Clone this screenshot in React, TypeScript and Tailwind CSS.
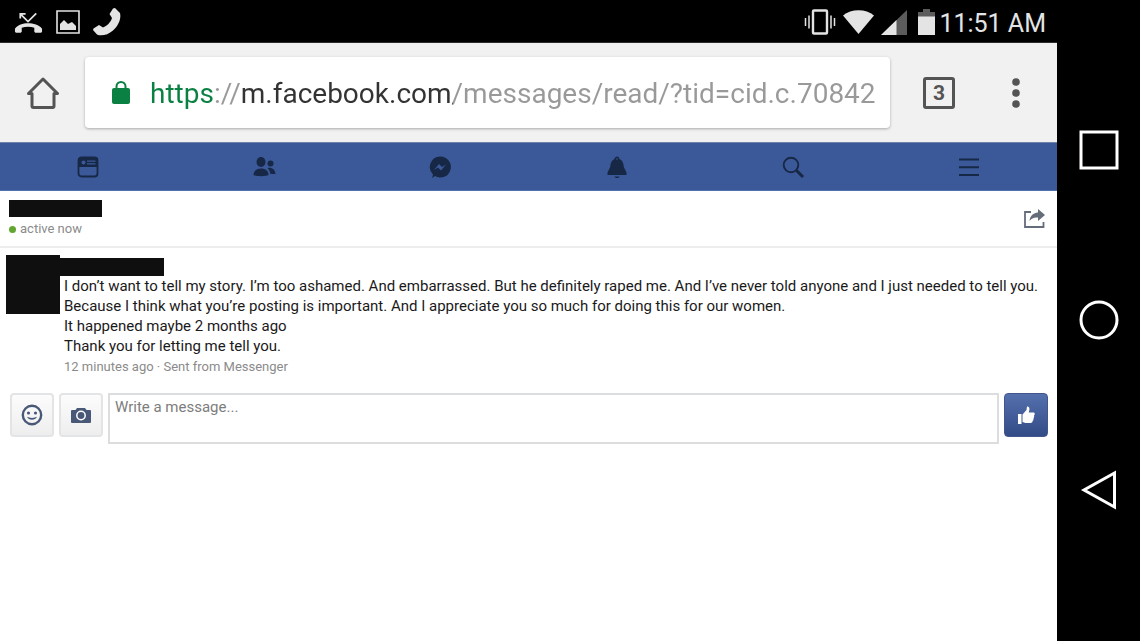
import type { ReactNode } from "react";
import { clsx } from "clsx";

const PAGE_URL = "https://m.facebook.com/messages/read/?tid=cid.c.70842";

const messageLines = [
  "I don’t want to tell my story. I’m too ashamed. And embarrassed. But he definitely raped me. And I’ve never told anyone and I just needed to tell you.",
  "Because I think what you’re posting is important. And I appreciate you so much for doing this for our women.",
  "It happened maybe 2 months ago",
  "Thank you for letting me tell you.",
];

type IconProps = { className?: string; viewBox?: string; children: ReactNode };

function Icon({ className, viewBox = "0 0 24 24", children }: IconProps) {
  return (
    <svg viewBox={viewBox} className={clsx("shrink-0", className)} fill="currentColor" aria-hidden="true">
      {children}
    </svg>
  );
}

function StatusBar() {
  return (
    <div className="flex h-[43px] items-center justify-between border-b border-[#2e2a2e] bg-black pt-[2px] pl-[14px] pr-[11px] text-[#e4e4e4]">
      <div className="flex items-center gap-[13px]">
        <Icon className="h-7 w-[29px]" viewBox="0 0 30 28">
          <path d="M1 24v-3c3-4 8-5.600 13.500-5.600S26 17 29 21v3l-1 1h-6l-1-1v-4c-4-1.300-9-1.300-13 0v4l-1 1H2z" />
          <path d="M6.500 10.500V5.500h5.500M6.500 5.500l8 8 8.500-8.500" fill="none" stroke="currentColor" strokeWidth="1.800" />
        </Icon>
        <Icon className="h-6 w-6">
          <path d="M1 1h22v22H1z" fill="none" stroke="currentColor" strokeWidth="1.600" />
          <path d="M4 20v-6l4-4 4 4 4-2 4 4v4z" />
        </Icon>
        <Icon className="h-7 w-7" viewBox="0 0 28 28">
          <path d="M22 0l5 5c1.500 6-2 13-7 17.500S8 28.500 4 26.500L0 22l.5-1.500L6 17l4 2.500c4-1.500 7.500-5 9-9.500L16.500 6 20 .5z" />
        </Icon>
      </div>
      <div className="flex items-center gap-[7px]">
        <Icon className="h-[26px] w-8" viewBox="0 0 32 26">
          <rect x="9" y="1.500" width="14" height="23" rx="1" fill="none" stroke="currentColor" strokeWidth="2.400" />
          <path d="M1.500 9v8M5 6.500v13M27 6.500v13M30.500 9v8" stroke="currentColor" strokeWidth="1.500" />
        </Icon>
        <Icon className="h-6 w-[31px]" viewBox="0 0 31 24">
          <path d="M15.500 24L0 5.500C8-1.500 23-1.500 31 5.500z" />
        </Icon>
        <Icon className="h-[25px] w-[26px]" viewBox="0 0 26 25">
          <path d="M0 25L26 0v25z" className="text-[#5c5c5c]" />
          <path d="M0 25L15.500 10v15z" />
        </Icon>
        <div className="flex items-center gap-1">
          <Icon className="ml-1 h-[26px] w-[17px]" viewBox="0 0 17 26">
            <path d="M5 0h7v3h5v5H0V3h5z" className="text-[#5c5c5c]" />
            <path d="M0 7.500h17V26H0z" />
          </Icon>
          <time className="pt-1 text-[25px] leading-7">11:51 AM</time>
        </div>
      </div>
    </div>
  );
}

function BrowserBar() {
  return (
    <div className="flex items-center bg-[#f1f1f1] py-[14px] text-[#545454]">
      <button aria-label="Home" className="flex w-[85px] shrink-0 justify-center">
        <Icon className="h-8 w-8" viewBox="0 0 32 32">
          <path
            d="M1.500 16.500L16 2l14.500 14.500H27V29q0 1.500-1.500 1.500h-19Q5 30.500 5 29V16.500z"
            fill="none"
            stroke="currentColor"
            strokeWidth="3"
            strokeLinejoin="round"
          />
        </Icon>
      </button>
      <form className="flex h-[71px] min-w-0 flex-1 items-center rounded-[4px] bg-white pl-[27px] pr-[14px] shadow-[0_1px_3px_rgba(0,0,0,0.3)]">
        <Icon className="mr-5 h-6 w-[18px] text-[#0b8043]" viewBox="0 0 18 24">
          <rect y="7" width="18" height="16" rx="2" />
          <path d="M4.500 9V5.500a4.500 4.500 0 0 1 9 0V9" fill="none" stroke="currentColor" strokeWidth="2" />
        </Icon>
        {/* scheme in green, host in dark, everything else greyed out */}
        <input
          aria-label="Address"
          defaultValue={PAGE_URL}
          spellCheck={false}
          className="h-10 min-w-0 flex-1 bg-[linear-gradient(90deg,#0b8043_64px,#999_64px,#999_91px,#333_91px,#333_303px,#999_303px)] bg-clip-text pt-[2px] text-[28px] text-transparent outline-none"
        />
      </form>
      <button
        aria-label="3 open tabs"
        className="ml-[33px] flex size-8 shrink-0 items-center justify-center rounded-[3px] border-[3px] border-[#545454] text-[21px] leading-6 font-bold"
      >
        3
      </button>
      <button aria-label="More options" className="flex w-[102px] shrink-0 justify-end pr-[37px]">
        <Icon className="h-[30px] w-2" viewBox="0 0 8 30">
          <circle cx="4" cy="4" r="3.800" />
          <circle cx="4" cy="15" r="3.800" />
          <circle cx="4" cy="26" r="3.800" />
        </Icon>
      </button>
    </div>
  );
}

const navItems = [
  {
    label: "News Feed",
    icon: (
      <>
        <rect x="2.500" y="2.500" width="19" height="19" rx="3" fill="none" stroke="currentColor" strokeWidth="1.800" />
        <path d="M2 12V5q0-3 3-3h14q3 0 3 3v7z" />
        <circle cx="7.500" cy="7.500" r="2" className="text-[#3b5998]" />
        <path d="M11 5.500h8.500v1.200H11zM11 8.300h8.500v1.200H11z" className="text-[#3b5998]" />
      </>
    ),
  },
  {
    label: "Friend Requests",
    icon: (
      <>
        <ellipse cx="9" cy="7" rx="4.500" ry="5" />
        <path d="M1.500 20c0-4 3-6.500 7.500-6.500s7.500 2.500 7.500 6.500c-2 1.500-13 1.500-15 0z" />
        <circle cx="18.500" cy="8.500" r="3" />
        <path d="M15.500 13c4-1 7.500 1 8 6h-5c-.5-2.500-1.500-4.500-3-6z" />
      </>
    ),
  },
  {
    label: "Messages",
    icon: (
      <>
        <path d="M12 1.500a10.500 10.500 0 1 1-5 19.500L4 23l1-3.500A10.500 10.500 0 0 1 12 1.500z" />
        <path d="M6 15l5-6 3 3 4-2.500-5 6-3-3z" className="text-[#3b5998]" />
      </>
    ),
  },
  {
    label: "Notifications",
    icon: (
      <>
        <path d="M12 1.500c1.500 0 2.300 1 2.500 2.500 3 1.300 4 4 4.300 8l2.700 5.500V20h-19v-2.500L5.200 12c.3-4 1.300-6.700 4.300-8 .2-1.500 1-2.500 2.500-2.500z" />
        <path d="M9.500 21.500h5c-.5 2-4.500 2-5 0z" />
        <circle cx="12" cy="4" r=".8" className="text-[#3b5998]" />
      </>
    ),
  },
  {
    label: "Search",
    icon: (
      <g fill="none" stroke="currentColor">
        <circle cx="10" cy="10" r="7.300" strokeWidth="1.900" />
        <path d="M15.500 15.500l6.500 6.500" strokeWidth="3" />
      </g>
    ),
  },
  {
    label: "Menu",
    icon: <path d="M2 3.500h20v2H2zM2 11.300h20v2H2zM2 19h20v2H2z" />,
  },
];

function FacebookNav() {
  return (
    <nav className="grid h-[49px] grid-cols-6 border-y border-t-[#7083ab] border-b-[#5270ad] bg-[#3b5998] pt-px text-[#172846]">
      {navItems.map((item) => (
        <a key={item.label} href="#" aria-label={item.label} className="flex items-center justify-center">
          <Icon className="size-6">{item.icon}</Icon>
        </a>
      ))}
    </nav>
  );
}

function ThreadHeader() {
  return (
    <header className="flex h-[57px] items-center justify-between border-b-2 border-[#ededed] pl-[9px] pr-3">
      <div>
        <div className="h-[17px] w-[93px] bg-[#0f0f0f]" />
        <p className="mt-1 flex items-center gap-1 text-[13px] leading-4 text-[#8b8b8b]">
          <span className="size-[7px] rounded-full bg-[#63a62f]" />
          active now
        </p>
      </div>
      <a href="#" aria-label="Share">
        <Icon className="h-[19px] w-[21px] text-[#656c7a]" viewBox="0 0 21 19">
          <path d="M7 3H1v15h18.500v-5" fill="none" stroke="currentColor" strokeWidth="1.800" />
          <path d="M14 0l7 6-7 6V8.500c-4-.5-6.500 1-8.500 3.500C6 7.500 8.500 4 14 3.500z" />
        </Icon>
      </a>
    </header>
  );
}

function Message() {
  return (
    <article className="flex pt-[7px] pl-[6px]">
      <div className="h-[59px] w-[54px] shrink-0 bg-[#0f0f0f]" />
      <div className="min-w-0 flex-1 pt-[3px]">
        <div className="h-[18px] w-[104px] bg-[#0f0f0f]" />
        <div className="pl-1 text-[15px] leading-5 text-[#1a1a1a]">
          {messageLines.map((line) => (
            <p key={line}>{line}</p>
          ))}
        </div>
        <p className="mt-px pl-1 text-[13px] leading-5 text-[#8b8b8b]">12 minutes ago · Sent from Messenger</p>
      </div>
    </article>
  );
}

const toolButton =
  "flex size-11 shrink-0 items-center justify-center rounded-[4px] border-2 border-[#e3e4e6] bg-linear-to-b from-[#fcfcfc] to-[#eeeeef] text-[#4a5878]";

function Composer() {
  return (
    <form className="mt-4 flex items-start gap-[5px] pl-[10px] pr-[9px]">
      <button type="button" aria-label="Add a sticker" className={toolButton}>
        <Icon className="size-[22px]" viewBox="0 0 22 22">
          <circle cx="11" cy="11" r="9.200" fill="none" stroke="currentColor" strokeWidth="2.400" />
          <circle cx="7.500" cy="9" r="1.600" />
          <circle cx="14.500" cy="9" r="1.600" />
          <path d="M6 12.800c3 1.500 7 1.500 10 0-1.500 4-8.500 4-10 0z" />
        </Icon>
      </button>
      <button type="button" aria-label="Add a photo" className={toolButton}>
        <Icon className="h-4 w-5" viewBox="0 0 20 16">
          <path d="M6 1h8l1.500 2H19q1 0 1 1v11q0 1-1 1H1q-1 0-1-1V4q0-1 1-1h3.500z" />
          <circle cx="10" cy="8.500" r="4.200" fill="none" stroke="#fff" strokeWidth="1.500" />
        </Icon>
      </button>
      <textarea
        aria-label="Write a message"
        placeholder="Write a message..."
        className="h-[51px] min-w-0 flex-1 resize-none border-2 border-[#dcdddf] px-[5px] py-[2px] text-[15px] leading-5 outline-none placeholder:text-[#7d7d7d]"
      />
      <button
        type="button"
        aria-label="Send a like"
        className="flex size-11 shrink-0 items-center justify-center rounded-[4px] border border-[#40568c] bg-linear-to-b from-[#5470ad] to-[#334c88] text-white"
      >
        <Icon className="h-[18px] w-[17px]" viewBox="0 0 17 18">
          <path d="M0 8h3.500v10H0zM4.500 8.500L8.500 4 9 .5Q11.500 0 11.500 3l-.7 3.500H16q1.500 1.500 0 3 .5 1.500-.5 2.800.3 1.500-.8 2.500 0 2-1.700 2.200H7.500L4.500 16z" />
        </Icon>
      </button>
    </form>
  );
}

function SystemButtons() {
  return (
    <aside className="flex w-[83px] shrink-0 flex-col items-center justify-center gap-[130px] bg-black pb-[2px] text-white">
      <button aria-label="Recent apps">
        <Icon className="size-10" viewBox="0 0 40 40">
          <rect x="2" y="2" width="36" height="36" fill="none" stroke="currentColor" strokeWidth="3" />
        </Icon>
      </button>
      <button aria-label="Home screen">
        <Icon className="size-10" viewBox="0 0 40 40">
          <circle cx="20" cy="20" r="18" fill="none" stroke="currentColor" strokeWidth="3" />
        </Icon>
      </button>
      <button aria-label="Back">
        <Icon className="size-10" viewBox="0 0 40 40">
          <path d="M35.500 3v34L5 20z" fill="none" stroke="currentColor" strokeWidth="3" />
        </Icon>
      </button>
    </aside>
  );
}

export default function App() {
  return (
    <div className="flex min-h-screen bg-white font-[Roboto,sans-serif]">
      <main className="min-w-0 flex-1">
        <StatusBar />
        <BrowserBar />
        <FacebookNav />
        <ThreadHeader />
        <Message />
        <Composer />
      </main>
      <SystemButtons />
    </div>
  );
}
